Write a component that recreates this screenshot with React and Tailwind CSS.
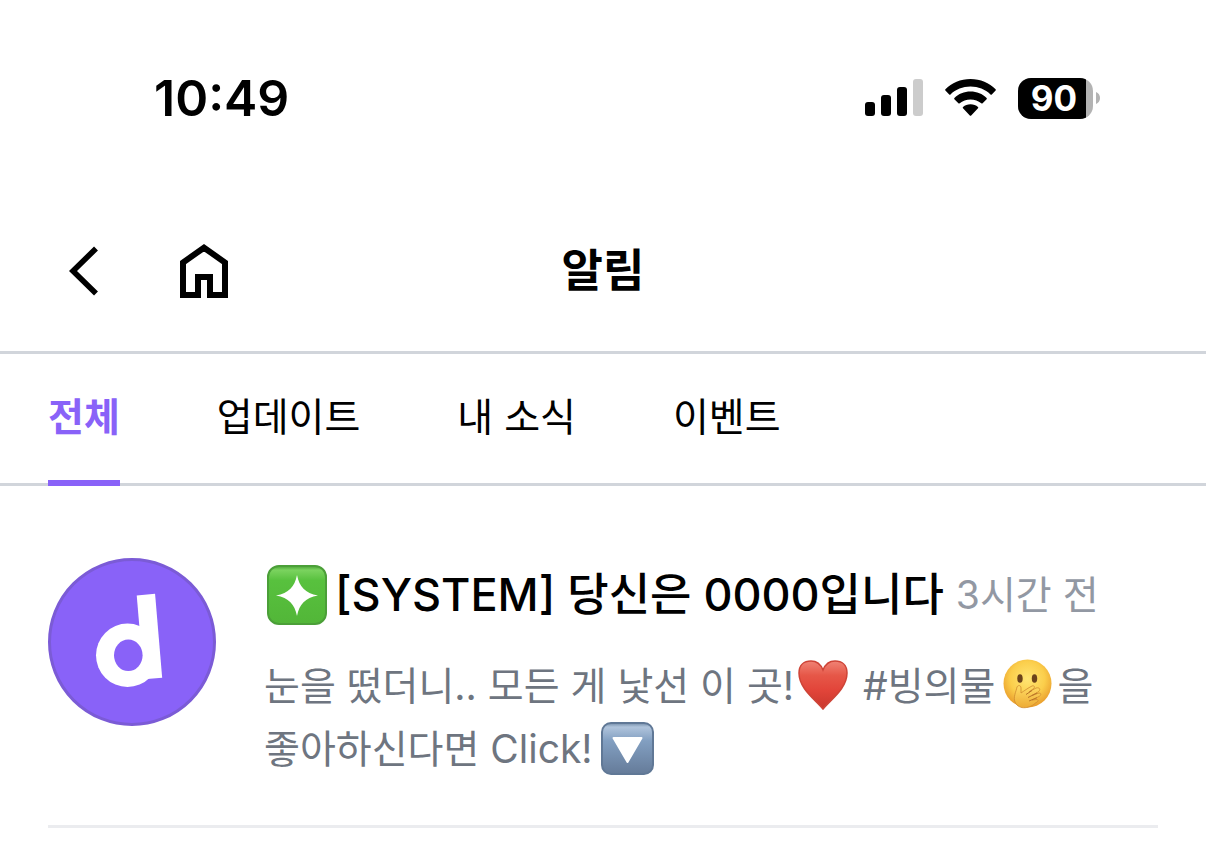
import { useState } from "react";

const tabs = ["전체", "업데이트", "내 소식", "이벤트"];

const SignalIcon = () => (
  <svg width="58" height="38" viewBox="0 0 58 38" aria-hidden="true">
    <rect x="0" y="23" width="10" height="14" rx="3" />
    <rect x="16" y="16" width="10" height="21" rx="3" />
    <rect x="32" y="8" width="10" height="29" rx="3" />
    <rect x="48" y="0" width="10" height="37" rx="3" fill="#cccccc" />
  </svg>
);

const WifiIcon = () => (
  <svg width="51" height="38" viewBox="0 0 51 38" aria-hidden="true">
    <path d="M25.5 0C35.4 0 44.4 3.9 50.6 10.2C51 10.6 51 11.2 50.6 11.6L46.8 15.4C46.4 15.8 45.9 15.8 45.5 15.4C40.3 10.4 33.2 7.6 25.5 7.6S10.7 10.4 5.5 15.4C5.1 15.8 4.6 15.8 4.2 15.4L.4 11.6C0 11.2 0 10.6.4 10.2C6.6 3.9 15.6 0 25.5 0Z" />
    <path d="M25.5 12.6C31.8 12.6 37.5 15 41.6 18.9C42 19.3 42 19.900 41.600 20.300L37.600 24.300C37.200 24.700 36.700 24.700 36.300 24.300C33.400 21.800 29.700 20.400 25.500 20.400S17.600 21.800 14.700 24.300C14.300 24.700 13.800 24.700 13.400 24.300L9.400 20.300C9 19.900 9 19.300 9.400 18.900C13.500 15 19.200 12.600 25.500 12.600Z" />
    <path d="M25.5 25.2C28.5 25.2 31 26.200 33 27.900C33.400 28.300 33.400 28.900 33 29.300L26.200 36.500C25.800 36.900 25.200 36.900 24.800 36.500L18 29.300C17.600 28.900 17.600 28.300 18 27.900C20 26.200 22.500 25.200 25.500 25.200Z" />
  </svg>
);

const Battery = () => (
  <div className="flex items-center gap-[3px]">
    <div className="flex h-[41px] w-[75px] items-center overflow-hidden rounded-[13px] bg-[#b3b3b3]">
      <div className="flex h-full w-[68px] items-center justify-center bg-black pl-1 text-[35px] font-bold text-white">
        90
      </div>
    </div>
    <svg width="4" height="12" viewBox="0 0 4 12" fill="#b3b3b3" aria-hidden="true">
      <path d="M0 0C2.500 1 4 3.300 4 6S2.500 11 0 12Z" />
    </svg>
  </div>
);

const BrandLogo = () => (
  <svg className="h-full w-full" viewBox="0 0 168 168" role="img" aria-label="d">
    <circle cx="84" cy="84" r="82.5" fill="#8962f8" stroke="#7b5bd6" strokeWidth="3" />
    <ellipse cx="79.5" cy="97.3" rx="31.5" ry="31.7" fill="#fff" />
    <path d="M97.9 36.6L105 120.500" stroke="#fff" strokeWidth="18.4" />
    <ellipse cx="80.3" cy="97.3" rx="14.3" ry="15.7" fill="#8962f8" />
  </svg>
);

const SparkleEmoji = () => (
  <svg className="mr-2 ml-[3px] inline-block h-[60px] w-[60px] shrink-0" viewBox="0 0 60 60" role="img" aria-label="❇">
    <defs>
      <linearGradient id="sparkle" x1="0" y1="0" x2="0" y2="1">
        <stop offset="0" stopColor="#4ba337" />
        <stop offset=".07" stopColor="#7bd35f" />
        <stop offset=".25" stopColor="#58c13e" />
        <stop offset="1" stopColor="#52b638" />
      </linearGradient>
    </defs>
    <rect x="1" y="1" width="58" height="58" rx="11" fill="url(#sparkle)" stroke="#4b9f38" strokeWidth="2" />
    <path
      d="M30 10C32.500 22 38 28 51 30.500C38 33 32.500 39 30 51C27.500 39 22 33 9 30.500C22 28 27.500 22 30 10Z"
      fill="#fff"
    />
  </svg>
);

const HeartEmoji = () => (
  <svg className="mx-1 mt-[6px] inline-block h-[50px] w-[50px] align-top" viewBox="0 0 50 50" role="img" aria-label="❤️">
    <defs>
      <linearGradient id="heart" x1="0" y1="0" x2="0" y2="1">
        <stop offset="0" stopColor="#f08375" />
        <stop offset=".3" stopColor="#e65748" />
        <stop offset=".6" stopColor="#e2453a" />
        <stop offset="1" stopColor="#c9372d" />
      </linearGradient>
    </defs>
    <path
      d="M25 49C18 40 1 29 1 13C1 5 6 1 13 1C19 1 23 5 25 10C27 5 31 1 37 1C44 1 49 5 49 13C49 29 32 40 25 49Z"
      fill="url(#heart)"
      stroke="#ce4437"
      strokeWidth="1.5"
    />
  </svg>
);

const GiggleEmoji = () => (
  <svg className="mt-[5px] mr-1 ml-2 inline-block h-[50px] w-[50px] align-top" viewBox="0 0 50 50" role="img" aria-label="🤭">
    <defs>
      <radialGradient id="face" cx=".5" cy=".4" r=".6">
        <stop offset="0" stopColor="#ffe574" />
        <stop offset=".6" stopColor="#fbce4b" />
        <stop offset="1" stopColor="#e99c2c" />
      </radialGradient>
      <linearGradient id="hand" x1="0" y1="0" x2="0" y2="1">
        <stop offset="0" stopColor="#ffdc64" />
        <stop offset="1" stopColor="#edab35" />
      </linearGradient>
    </defs>
    <circle cx="24.5" cy="24.5" r="24" fill="url(#face)" />
    <ellipse cx="17" cy="19.5" rx="2.700" ry="4.300" fill="#6b421b" />
    <ellipse cx="31.500" cy="19.500" rx="2.700" ry="4.300" fill="#6b421b" />
    <path
      d="M12 43C10 38 13 33 14 28C15 26 18 26 18 29L18 34C21 32 25 29 29 27C32 26 32 29 30 30L26 33L33 29C37 28 38 31 35 33L29 36.500L36 34C39 34 38 37 35 38L29 41L34 40.500C36 41 35 43 33 43.500C28 49 16 52 12 43Z"
      fill="url(#hand)"
      stroke="#cf8a2e"
      strokeWidth=".8"
    />
    <path d="M23 35.500L29 31.500M25 38.500L34 34M26 42L34 38.700" fill="none" stroke="#b87328" strokeWidth="1" />
  </svg>
);

const DownEmoji = () => (
  <svg className="mt-[5px] ml-2 inline-block h-[53px] w-[53px] align-top" viewBox="0 0 53 53" role="img" aria-label="🔽">
    <defs>
      <linearGradient id="down" x1="0" y1="0" x2="0" y2="1">
        <stop offset="0" stopColor="#758da9" />
        <stop offset=".08" stopColor="#b0c4dc" />
        <stop offset=".35" stopColor="#829fc1" />
        <stop offset="1" stopColor="#657b99" />
      </linearGradient>
    </defs>
    <rect x="1" y="1" width="51" height="51" rx="9" fill="url(#down)" stroke="#607896" strokeWidth="2" />
    <path d="M12.5 16H40.5L26.5 40Z" fill="#fff" stroke="#fff" strokeWidth="2" strokeLinejoin="round" />
  </svg>
);

const StatusBar = () => (
  <div className="flex items-center justify-between pt-[68px] pr-[106px] pb-[62px] pl-[154px]">
    <div className="text-[50px] leading-[60px] font-semibold">10:49</div>
    <div className="flex items-center gap-[22px]">
      <SignalIcon />
      <WifiIcon />
      <Battery />
    </div>
  </div>
);

const NavBar = () => (
  <header className="grid h-[164px] grid-cols-3 items-center border-b-[3px] border-[#d1d5db]">
    <div className="flex items-center gap-[81px] pl-[69px]">
      <button aria-label="뒤로">
        <svg width="30" height="50" viewBox="0 0 30 50" fill="none" stroke="#000" strokeWidth="5.6">
          <path d="M27 2.500L4 25L27 47.500" />
        </svg>
      </button>
      <button aria-label="홈">
        <svg width="48" height="54" viewBox="0 0 48 54" fill="none" stroke="#000" strokeWidth="6">
          <path d="M3 51V18.500L24 3.700L45 18.500V51H30V33H18V51Z" />
        </svg>
      </button>
    </div>
    <h1 className="text-center text-[45px] leading-[60px] font-bold">알림</h1>
  </header>
);

const Notification = () => (
  <article className="mx-12 flex gap-12 border-b-[3px] border-[#ebecef] pt-[72px] pb-[45px]">
    <div className="h-[168px] w-[168px] shrink-0">
      <BrandLogo />
    </div>
    <div className="min-w-0 flex-1">
      <div className="flex h-[74px] items-center whitespace-nowrap">
        <SparkleEmoji />
        <h2 className="text-[45px] font-medium">[SYSTEM] 당신은 0000입니다</h2>
        <span className="ml-3 text-[39px] text-[#9298a3]">3시간 전</span>
      </div>
      <p className="mt-[22px] text-[39px] leading-[63px] text-[#6e7580]">
        눈을 떴더니.. 모든 게 낯선 이 곳!
        <HeartEmoji /> #빙의물
        <GiggleEmoji />을
        <br />
        좋아하신다면 Click!
        <DownEmoji />
      </p>
    </div>
  </article>
);

const App = () => {
  const [activeTab, setActiveTab] = useState("전체");

  return (
    <div
      lang="ko"
      className="min-h-screen bg-white font-[Inter,'Noto_Sans_CJK_KR',sans-serif] text-black"
    >
      <StatusBar />
      <NavBar />
      <nav className="flex gap-[97px] border-b-[3px] border-[#d1d5db] px-12">
        {tabs.map((tab) => (
          <button
            key={tab}
            onClick={() => setActiveTab(tab)}
            className={
              activeTab === tab
                ? "-mb-[3px] h-[132px] border-b-[6px] border-[#8962f8] text-[39px] font-bold text-[#8962f8]"
                : "-mb-[3px] h-[132px] border-b-[6px] border-transparent text-[39px]"
            }
          >
            {tab}
          </button>
        ))}
      </nav>
      <main>
        <Notification />
      </main>
    </div>
  );
};

export default App;
